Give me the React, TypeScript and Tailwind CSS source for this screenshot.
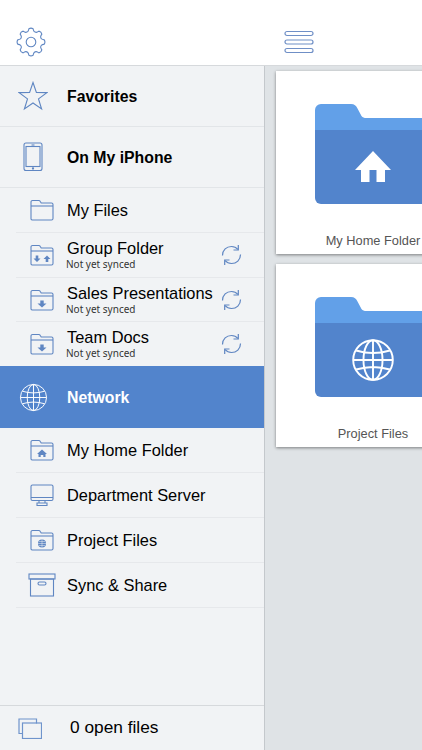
import React from "react";

const BLUE = "#5f86c2";

function Gear() {
  // 8-tooth outline built by hand
  const pts: string[] = [];
  const teeth = 8;
  for (let i = 0; i < teeth; i++) {
    const a = (i / teeth) * Math.PI * 2 - Math.PI / 2;
    const step = Math.PI / teeth;
    const p = (r: number, t: number) =>
      `${(15 + r * Math.cos(t)).toFixed(2)} ${(15 + r * Math.sin(t)).toFixed(2)}`;
    pts.push(
      `${i === 0 ? "M" : "L"}${p(11, a - step * 0.72)}`,
      `Q${p(11.6, a - step * 0.55)} ${p(13.4, a - step * 0.4)}`,
      `Q${p(14.6, a)} ${p(13.4, a + step * 0.4)}`,
      `Q${p(11.6, a + step * 0.55)} ${p(11, a + step * 0.72)}`,
      `Q${p(10.4, a + step)} ${p(11, a + step * 1.28)}`,
    );
  }
  return (
    <svg width="30" height="30" viewBox="0 0 30 30" fill="none" stroke={BLUE} strokeWidth="1.100" strokeLinejoin="round">
      <path d={pts.join(" ") + " Z"} />
      <circle cx="15" cy="15" r="4.800" />
    </svg>
  );
}

function Hamburger() {
  return (
    <svg width="30" height="24" viewBox="0 0 30 24" fill="none" stroke="#6f8fc6" strokeWidth="1.200">
      <rect x="1" y="1.500" width="28" height="4" rx="2" />
      <rect x="1" y="10" width="28" height="4" rx="2" />
      <rect x="1" y="18.500" width="28" height="4" rx="2" />
    </svg>
  );
}

function Star() {
  return (
    <svg width="30" height="30" viewBox="0 0 30 30" fill="none" stroke={BLUE} strokeWidth="1.100" strokeLinejoin="miter">
      <path d="M15 1.500 18.400 11.400 28.900 11.600 20.500 17.900 23.600 28 15 22 6.400 28 9.500 17.900 1.100 11.600 11.600 11.400Z" />
    </svg>
  );
}

function Phone() {
  return (
    <svg width="20" height="30" viewBox="0 0 20 30" fill="none" stroke={BLUE} strokeWidth="1.100">
      <rect x="1" y="1" width="18" height="27.500" rx="2" />
      <rect x="3" y="4.500" width="14" height="20" />
      <path d="M8.500 3h3" />
      <circle cx="10" cy="26.500" r=".6" fill={BLUE} />
    </svg>
  );
}

function Globe({ color, size, sw }: { color: string; size: number; sw: number }) {
  return (
    <svg width={size} height={size} viewBox="0 0 30 30" fill="none" stroke={color} strokeWidth={sw}>
      <circle cx="15" cy="15" r="13.500" />
      <ellipse cx="15" cy="15" rx="6.500" ry="13.500" />
      <path d="M15 1.500v27M1.500 15h27M3.500 8.500q11.500 3.500 23 0M3.500 21.500q11.500-3.500 23 0" />
    </svg>
  );
}

function FolderOutline({ children }: { children?: React.ReactNode }) {
  return (
    <svg width="24" height="22" viewBox="0 0 24 22" fill="none" stroke={BLUE} strokeWidth="1.100">
      <path d="M1 20V3a1.500 1.500 0 0 1 1.500-1.500h6.300c.8 0 1.200.4 1.500 1l.9 1.500h10.300a1.500 1.500 0 0 1 1.500 1.500v14a1.500 1.500 0 0 1-1.500 1.500h-19A1.500 1.500 0 0 1 1 20Z" />
      <path d="M1 7h22" />
      {children}
    </svg>
  );
}

function DownFolder() {
  return (
    <FolderOutline>
      <path d="M10.300 11.500h3.400v3h2.800L12 18.500 7.500 14.500h2.800Z" fill={BLUE} stroke="none" />
    </FolderOutline>
  );
}

function GroupFolder() {
  return (
    <FolderOutline>
      <path d="M5.700 11.500h2.600v3h2.200L7 18 3.500 14.500h2.200Z" fill={BLUE} stroke="none" />
      <path d="M15.700 18h2.600v-3h2.200L17 11.500 13.500 15h2.200Z" fill={BLUE} stroke="none" />
    </FolderOutline>
  );
}

function HomeFolder() {
  return (
    <FolderOutline>
      <path d="M12 10.500 17 15h-1.500v3h-2.200v-2h-2.600v2H8.500v-3H7Z" fill={BLUE} stroke="none" />
    </FolderOutline>
  );
}

function GlobeFolder() {
  return (
    <FolderOutline>
      <circle cx="12" cy="14.500" r="4" fill={BLUE} stroke="none" />
      <path d="M8 14.500h8M12 10.500v8M9 12.500h6M9 16.500h6" stroke="#f1f3f5" strokeWidth=".5" />
    </FolderOutline>
  );
}

function Monitor() {
  return (
    <svg width="24" height="23" viewBox="0 0 24 23" fill="none" stroke={BLUE} strokeWidth="1.100">
      <rect x="1" y="1" width="22" height="15.500" rx="1.500" />
      <path d="M1 13.500h22M9 16.500v2.500H7v2.500h10V19h-2v-2.500M9 19h6" />
    </svg>
  );
}

function Box() {
  return (
    <svg width="28" height="24" viewBox="0 0 28 24" fill="none" stroke={BLUE} strokeWidth="1.100">
      <rect x="1" y="1" width="26" height="5" />
      <rect x="2.500" y="6" width="23" height="17" />
      <rect x="10" y="9" width="8" height="3" rx="1.500" />
    </svg>
  );
}

function Sync() {
  return (
    <svg width="21" height="22" viewBox="0 0 21 22" fill="none" stroke={BLUE} strokeWidth="1.200">
      <path d="M1.500 11.500C1.500 6 5.500 2.500 10.500 2.500c2.600 0 4.800 1 6.400 2.800" />
      <path d="M12.500 6h4.800V1" />
      <path d="M19.500 10.500c0 5.500-4 9-9 9-2.600 0-4.800-1-6.400-2.800" />
      <path d="M8.500 16H3.700v5" />
    </svg>
  );
}

function Files() {
  return (
    <svg width="24" height="21" viewBox="0 0 24 21" fill="none" stroke="#6f94cc" strokeWidth="1.200">
      <path d="M4.500 15.500H1V1h17.500v4.500" />
      <rect x="4.500" y="5" width="19" height="15.500" />
    </svg>
  );
}

function HeaderRow({
  icon,
  label,
  heightClass,
  active,
}: {
  icon: React.ReactNode;
  label: string;
  heightClass: string;
  active?: boolean;
}) {
  return (
    <div
      className={`flex items-center ${heightClass} ${
        active ? "bg-[#5284cc] text-white" : "border-b border-[#e2e5e8] text-black"
      }`}
    >
      <div className="w-[67px] flex justify-center pr-px shrink-0">{icon}</div>
      <span className="text-[15.800px] font-bold leading-[20px] pt-px">{label}</span>
    </div>
  );
}

function SubRow({
  icon,
  label,
  sub,
  heightClass,
  last,
}: {
  icon: React.ReactNode;
  label: string;
  sub?: string;
  heightClass: string;
  last?: boolean;
}) {
  return (
    <div className={`ml-4 flex items-center ${last ? "" : "border-b border-[#e6e8eb]"} ${heightClass}`}>
      <div className="w-[51px] shrink-0 flex justify-center">{icon}</div>
      <div className="flex-1 min-w-0">
        <div className="text-[16.400px] leading-[19px] text-black whitespace-nowrap">{label}</div>
        {sub && <div className="text-[10px] leading-[13px] text-[#333] -ml-px font-['Noto_Sans',sans-serif]">{sub}</div>}
      </div>
      {sub && (
        <div className="w-[66px] shrink-0 flex justify-center">
          <Sync />
        </div>
      )}
    </div>
  );
}

function FolderCard({ glyph, label }: { glyph: React.ReactNode; label: string }) {
  return (
    <div className="w-[194px] h-[183px] shrink-0 bg-white shadow-[0_1px_3px_rgba(0,0,0,0.45)] flex flex-col items-center">
      <div className="mt-[33px] w-[116px] h-[100px] relative flex items-center justify-center">
        <svg className="absolute inset-0" width="116" height="100" viewBox="0 0 116 100">
          <path
            d="M0 30V6a6 6 0 0 1 6-6h30c3.500 0 5 1.500 6.500 4.500l4 7.500c1.200 1.600 2.500 2 5 2H110a6 6 0 0 1 6 6V30Z"
            fill="#62a0e8"
          />
          <path d="M0 26h116v68a6 6 0 0 1-6 6H6a6 6 0 0 1-6-6Z" fill="#5284cc" />
        </svg>
        <div className="relative mt-[26px]">{glyph}</div>
      </div>
      <div className="mt-[30px] text-[12.800px] leading-[14px] text-[#555]">{label}</div>
    </div>
  );
}

export default function App() {
  return (
    <div className="w-[422px] h-[750px] overflow-hidden flex flex-col bg-white font-['Liberation_Sans',Arial,sans-serif]">
      {/* Top bar */}
      <div className="h-[66px] shrink-0 flex items-end border-b border-[#d6d9dc] pb-[8px]">
        <div className="w-[62px] flex justify-center">
          <Gear />
        </div>
        <div className="ml-[222px] mb-[3px]">
          <Hamburger />
        </div>
      </div>

      <div className="flex flex-1 min-h-0">
        {/* Sidebar */}
        <div className="w-[265px] shrink-0 bg-[#f1f3f5] border-r border-[#c4c8cc] flex flex-col">
          <HeaderRow icon={<Star />} label="Favorites" heightClass="h-[61px]" />
          <HeaderRow icon={<Phone />} label="On My iPhone" heightClass="h-[61px]" />
          <SubRow icon={<FolderOutline />} label="My Files" heightClass="h-[45px]" />
          <SubRow icon={<GroupFolder />} label="Group Folder" sub="Not yet synced" heightClass="h-[45px]" />
          <SubRow icon={<DownFolder />} label="Sales Presentations" sub="Not yet synced" heightClass="h-[44px]" />
          <SubRow icon={<DownFolder />} label="Team Docs" sub="Not yet synced" heightClass="h-[44px]" last />
          <HeaderRow icon={<Globe color="#ffffff" size={29} sw={1} />} label="Network" heightClass="h-[62px]" active />
          <SubRow icon={<HomeFolder />} label="My Home Folder" heightClass="h-[45px]" />
          <SubRow icon={<Monitor />} label="Department Server" heightClass="h-[45px]" />
          <SubRow icon={<GlobeFolder />} label="Project Files" heightClass="h-[45px]" />
          <SubRow icon={<Box />} label="Sync & Share" heightClass="h-[45px]" />

          {/* Footer */}
          <div className="mt-auto h-[45px] border-t border-[#d6d9dc] flex items-center">
            <div className="w-[70px] shrink-0 flex justify-center pr-[10px]">
              <Files />
            </div>
            <span className="text-[17.300px] text-black">0 open files</span>
          </div>
        </div>

        {/* Folder grid */}
        <div className="flex-1 min-w-0 bg-[#dfe3e6] pl-[11px] pt-[5px] flex flex-col gap-[10px] overflow-hidden">
          <FolderCard
            label="My Home Folder"
            glyph={
              <svg width="38" height="32" viewBox="0 0 38 32" fill="#ffffff">
                <path d="M19 0 37 19H31V31H22.500V19H15.500V31H7V19H1Z" />
              </svg>
            }
          />
          <FolderCard label="Project Files" glyph={<Globe color="#ffffff" size={44} sw={1.300} />} />
        </div>
      </div>
    </div>
  );
}
